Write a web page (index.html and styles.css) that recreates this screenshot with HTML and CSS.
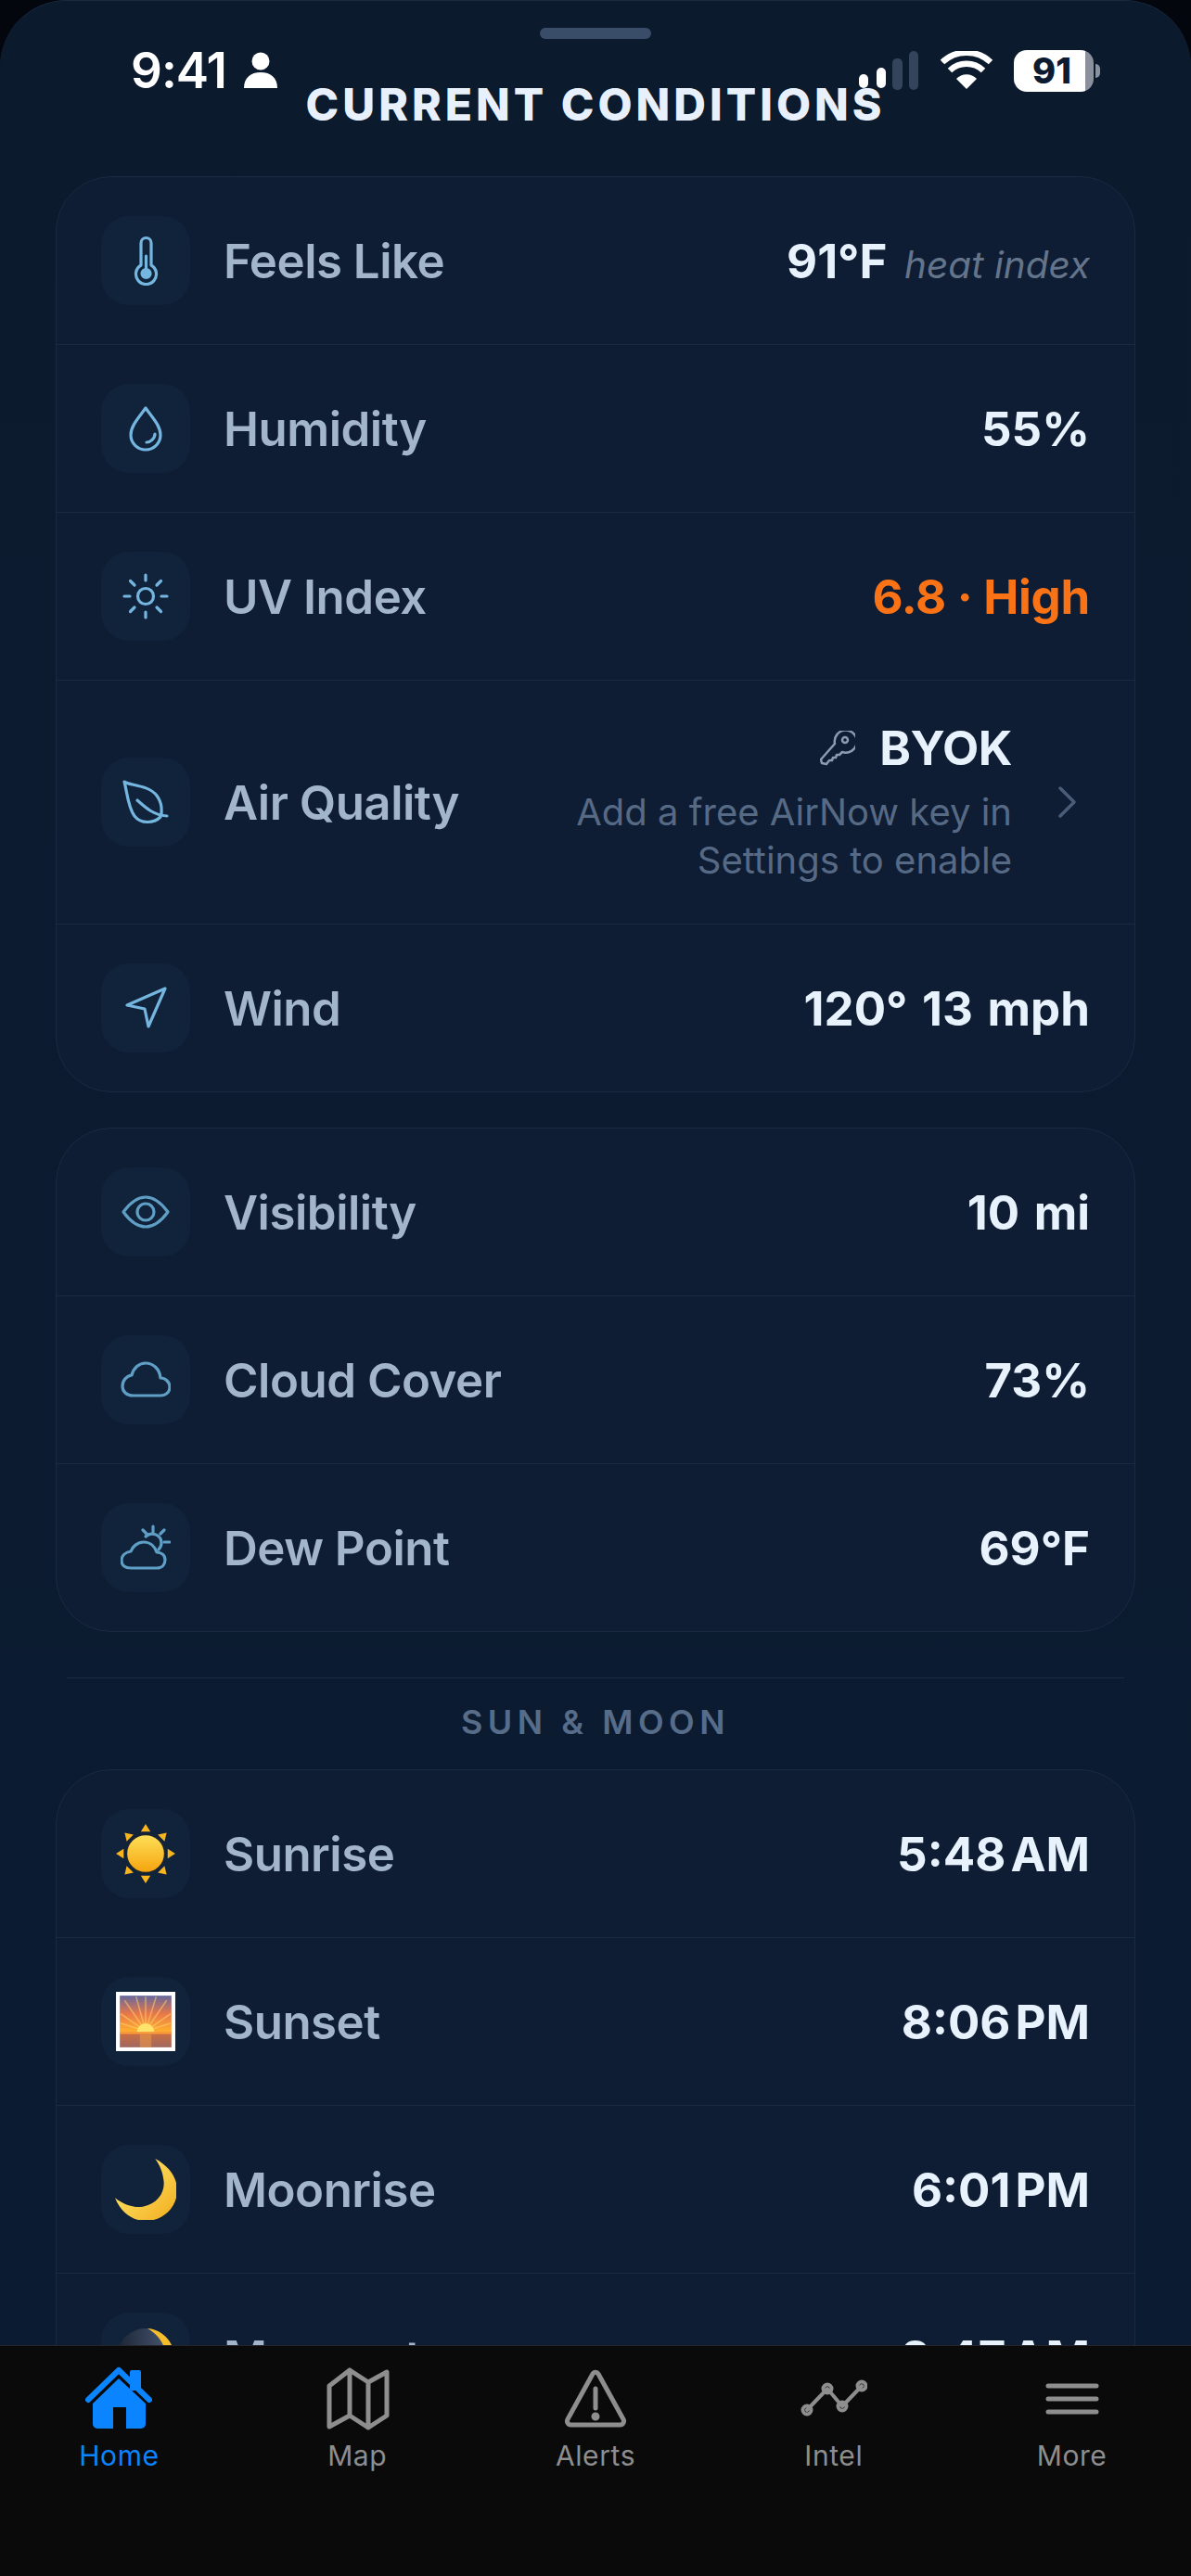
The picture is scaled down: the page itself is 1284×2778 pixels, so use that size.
FILE: index.html
```html
<!DOCTYPE html>
<html lang="en">
<head>
    <meta charset="UTF-8" />
    <meta name="viewport" content="width=device-width, initial-scale=1.0" />
    <title>Current Conditions</title>
    <link rel="stylesheet" href="styles.css">
</head>
<body>
    <div class="phone">
        <div class="status-bar">
            <div class="status-left">
                <span class="clock">9:41</span>
                <svg width="36" height="40" viewBox="0 0 36 40"><circle cx="18" cy="10" r="9.5" fill="#fff"/><path d="M0 39c0-11 7-17 18-17s18 6 18 17z" fill="#fff"/></svg>
            </div>
            <div class="status-right">
                <svg width="66" height="44" viewBox="0 0 66 44">
                    <rect x="1" y="26" width="10" height="15" rx="5" fill="#fff"/>
                    <rect x="20" y="19" width="10" height="22" rx="5" fill="#fff"/>
                    <rect x="37" y="9" width="11" height="34" rx="5" fill="#33445b"/>
                    <rect x="55" y="1" width="10" height="42" rx="5" fill="#33445b"/>
                </svg>
                <svg width="58" height="42" viewBox="0 0 58 42" fill="none" stroke="#fff" stroke-width="6.5">
                    <path d="M29 41 18 30a15 15 0 0 1 22 0z" fill="#fff" stroke="none"/>
                    <path d="M11 21a26 26 0 0 1 36 0"/>
                    <path d="M3 12a38 38 0 0 1 52 0"/>
                </svg>
                <div class="battery">91</div>
            </div>
        </div>

        <main class="sheet">
            <div class="handle"></div>
            <h1>CURRENT CONDITIONS</h1>

            <section class="card">
                <div class="row">
                    <div class="icon-box">
                        <svg class="line-icon bright" viewBox="0 0 54 54"><path d="M22 32V8a5.500 5.500 0 0 1 11 0v24a11 11 0 1 1-11 0z"/><path d="M27.500 22v18"/><circle cx="27.500" cy="41" r="4.500" fill="currentColor"/></svg>
                    </div>
                    <span class="label">Feels Like</span>
                    <span class="value">91°F <em>heat index</em></span>
                </div>
                <div class="row">
                    <div class="icon-box">
                        <svg class="line-icon bright" viewBox="0 0 54 54"><path d="M27 5C20 15 11 24 11 34a16 16 0 0 0 32 0C43 24 34 15 27 5z"/><path d="M37 33c0 5-5 9-9 9"/></svg>
                    </div>
                    <span class="label">Humidity</span>
                    <span class="value">55%</span>
                </div>
                <div class="row">
                    <div class="icon-box">
                        <svg class="line-icon bright" viewBox="0 0 54 54"><circle cx="27" cy="27" r="8.500"/><path d="M27 4v6M27 44v6M4 27h6M44 27h6M10.500 10.500l4.500 4.500M39 39l4.500 4.500M10.500 43.500 15 39M39 15l4.500-4.500"/></svg>
                    </div>
                    <span class="label">UV Index</span>
                    <span class="value uv">6.8 · High</span>
                </div>
                <div class="row row-tall">
                    <div class="icon-box">
                        <svg class="line-icon bright" viewBox="0 0 54 54"><path d="M4 5c4 4 26 3 35 15 6 8 6 18 4 23-7 7-21 8-28-1C8 33 7 16 4 5z"/><path d="M18 25c10 9 18 16 32 17"/></svg>
                    </div>
                    <span class="label">Air Quality</span>
                    <div class="value-stack">
                        <div class="byok">
                            <svg width="38" height="38" viewBox="0 0 38 38" fill="none" stroke="#8b9bb0" stroke-width="2.500" stroke-linejoin="round"><path d="M16 14a12 12 0 1 1 8 9l-3 3h-3l-1 3h-3l-1 3h-3l-3 4-5-1-1-4z"/><circle cx="27" cy="10" r="3"/></svg>
                            <span class="value byok-text">BYOK</span>
                        </div>
                        <p class="hint">Add a free AirNow key in Settings to enable</p>
                    </div>
                    <svg class="chevron" width="34" height="34" viewBox="0 0 34 34"><path d="M2 2l15 15L2 32"/></svg>
                </div>
                <div class="row">
                    <div class="icon-box">
                        <svg class="line-icon bright" viewBox="0 0 54 54"><path d="M48 6 7 24l19 4 4 19z"/></svg>
                    </div>
                    <span class="label">Wind</span>
                    <span class="value">120° 13 mph</span>
                </div>
            </section>

            <section class="card">
                <div class="row">
                    <div class="icon-box">
                        <svg class="line-icon" viewBox="0 0 54 54"><path d="M3 27c8-11 16-16 24-16s16 5 24 16c-8 11-16 16-24 16S11 38 3 27z"/><circle cx="27" cy="27" r="9"/></svg>
                    </div>
                    <span class="label">Visibility</span>
                    <span class="value">10 mi</span>
                </div>
                <div class="row">
                    <div class="icon-box">
                        <svg class="line-icon" viewBox="0 0 54 54"><path d="M13 44h30c6 0 10-4 10-9 0-6-5-10-10-10-1-10-8-16-16-16-7 0-13 5-15 13-6 1-10 6-10 12 0 6 5 10 11 10z"/></svg>
                    </div>
                    <span class="label">Cloud Cover</span>
                    <span class="value">73%</span>
                </div>
                <div class="row">
                    <div class="icon-box">
                        <svg class="line-icon" viewBox="0 0 54 54"><path d="M11 49h28c6 0 9-4 9-9 0-5-4-8-9-8-2-6-7-11-14-11s-12 5-14 10c-6 1-10 5-10 10 0 5 4 8 10 8z"/><path d="M27 15a10 10 0 0 1 17 7c0 3-1 5-3 7"/><path d="M35 4v6M24 8l4 4M47 8l-4 4M47 21h6"/></svg>
                    </div>
                    <span class="label">Dew Point</span>
                    <span class="value">69°F</span>
                </div>
            </section>

            <div class="divider"></div>
            <h2>SUN &amp; MOON</h2>

            <section class="card">
                <div class="row">
                    <div class="icon-box">
                        <svg class="emoji" viewBox="0 0 64 64">
                            <defs><linearGradient id="sunFill" x1="0" y1="0" x2="0" y2="1"><stop offset="0" stop-color="#ffe05a"/><stop offset="1" stop-color="#f4a30c"/></linearGradient></defs>
                            <g fill="#fab41e">
                                <path d="M32 1l5 8H27z"/>
                                <path d="M32 1l5 8H27z" transform="rotate(45 32 32)"/>
                                <path d="M32 1l5 8H27z" transform="rotate(90 32 32)"/>
                                <path d="M32 1l5 8H27z" transform="rotate(135 32 32)"/>
                                <path d="M32 1l5 8H27z" transform="rotate(180 32 32)"/>
                                <path d="M32 1l5 8H27z" transform="rotate(225 32 32)"/>
                                <path d="M32 1l5 8H27z" transform="rotate(270 32 32)"/>
                                <path d="M32 1l5 8H27z" transform="rotate(315 32 32)"/>
                            </g>
                            <circle cx="32" cy="32" r="20" fill="url(#sunFill)" stroke="#1c2430" stroke-width="1.500"/>
                        </svg>
                    </div>
                    <span class="label">Sunrise</span>
                    <span class="value">5:48<i class="gap"></i>AM</span>
                </div>
                <div class="row">
                    <div class="icon-box">
                        <svg class="emoji" viewBox="0 0 64 64">
                            <defs><linearGradient id="sky" x1="0" y1="0" x2="0" y2="1"><stop offset="0" stop-color="#65689c"/><stop offset=".35" stop-color="#e8774a"/><stop offset=".7" stop-color="#ffb02e"/><stop offset=".71" stop-color="#cf6e3f"/><stop offset="1" stop-color="#a0695f"/></linearGradient></defs>
                            <rect x="1" y="1" width="62" height="62" fill="#fff"/>
                            <rect x="5" y="5" width="54" height="54" fill="url(#sky)"/>
                            <g stroke="#ffd36b" stroke-width="1.500" opacity=".55">
                                <path d="M32 42 10 10M32 42 22 6M32 42V6M32 42 43 6M32 42 54 10M32 42 6 24M32 42l26-18M32 42 6 34M32 42l26-8"/>
                            </g>
                            <path d="M23 43a9 9 0 0 1 18 0z" fill="#ffe36a"/>
                            <rect x="5" y="43" width="54" height="2" fill="#ff9e3c"/>
                            <rect x="26" y="45" width="12" height="14" fill="#e8964a" opacity=".6"/>
                        </svg>
                    </div>
                    <span class="label">Sunset</span>
                    <span class="value">8:06<i class="gap"></i>PM</span>
                </div>
                <div class="row">
                    <div class="icon-box">
                        <svg class="emoji" viewBox="0 0 64 64">
                            <defs><linearGradient id="moonFill" x1="0" y1="0" x2="1" y2="1"><stop offset="0" stop-color="#fff07a"/><stop offset="1" stop-color="#f2ac1c"/></linearGradient></defs>
                            <path d="M42 0c15 8 23 20 23 33 0 18-15 32-33 32-14 0-26-9-32-24 9 7 20 11 30 9 14-3 22-14 21-26-1-10-4-17-9-24z" fill="url(#moonFill)"/>
                        </svg>
                    </div>
                    <span class="label">Moonrise</span>
                    <span class="value">6:01<i class="gap"></i>PM</span>
                </div>
                <div class="row">
                    <div class="icon-box">
                        <svg class="emoji" viewBox="0 0 64 64">
                            <defs><linearGradient id="moonDark" x1="0" y1="0" x2="1" y2="0"><stop offset="0" stop-color="#1c2536"/><stop offset="1" stop-color="#4a5a76"/></linearGradient></defs>
                            <circle cx="32" cy="32" r="30" fill="url(#moonDark)"/>
                            <path d="M34 2c15 1 28 14 28 30h-9c0-12-7-23-19-30z" fill="#f5bd2c"/>
                        </svg>
                    </div>
                    <span class="label">Moonset</span>
                    <span class="value">2:47<i class="gap"></i>AM</span>
                </div>
            </section>
        </main>

        <nav class="tab-bar">
            <div class="tab active">
                <svg viewBox="0 0 72 72">
                    <path d="M36 14l29 27v22a5 5 0 0 1-5 5H44V45H30v23H13a5 5 0 0 1-5-5V41z" fill="currentColor"/>
                    <rect x="48" y="5" width="12" height="22" rx="2" fill="currentColor"/>
                    <path d="M3 37 36 5l33 32" fill="none" stroke="currentColor" stroke-width="6" stroke-linecap="round" stroke-linejoin="round"/>
                </svg>
                <span>Home</span>
            </div>
            <div class="tab">
                <svg class="tab-line" viewBox="0 0 72 72"><path d="M6 22 28 5l20 13 20-11v47L48 67 28 54 6 66zM28 5v49M48 18v49"/></svg>
                <span>Map</span>
            </div>
            <div class="tab">
                <svg class="tab-line" viewBox="0 0 72 72"><path d="M33 9a3.500 3.500 0 0 1 6 0l27 49a4 4 0 0 1-3.500 6h-53a4 4 0 0 1-3.500-6z"/><path d="M36 25v21"/><circle cx="36" cy="55" r="2" fill="currentColor"/></svg>
                <span>Alerts</span>
            </div>
            <div class="tab">
                <svg class="tab-line thin" viewBox="0 0 72 72"><path d="M7 48 29 25l16 19 21-22"/><circle cx="7" cy="48" r="4.500"/><circle cx="29" cy="25" r="4.500"/><circle cx="45" cy="44" r="4.500"/><circle cx="66" cy="22" r="4.500"/></svg>
                <span>Intel</span>
            </div>
            <div class="tab">
                <svg class="tab-line" viewBox="0 0 72 72"><path d="M10 22h52M10 36h52M10 50h52"/></svg>
                <span>More</span>
            </div>
        </nav>
    </div>
</body>
</html>
```

FILE: styles.css
```css
html, body {
    margin: 0;
    padding: 0;
    background: #000;
}

body {
    font-family: "Inter", "Liberation Sans", sans-serif;
}

.phone {
    position: relative;
    width: 1284px;
    height: 2778px;
    display: flex;
    flex-direction: column;
    overflow: hidden;
    background: #03070d;
}

/* status bar sits on top of the sheet */
.status-bar {
    position: absolute;
    top: 53px;
    left: 0;
    right: 0;
    height: 46px;
    padding: 0 105px 0 141px;
    display: flex;
    justify-content: space-between;
    align-items: center;
    color: #fff;
    z-index: 5;
}

.status-left {
    display: flex;
    align-items: center;
    gap: 19px;
}

.clock {
    font-size: 53px;
    font-weight: 600;
    line-height: 46px;
    letter-spacing: -1px;
}

.status-right {
    display: flex;
    align-items: center;
    gap: 22px;
}

.battery {
    position: relative;
    width: 86px;
    height: 45px;
    border-radius: 14px;
    background: linear-gradient(90deg, #fff 90%, #8a919c 90%);
    color: #0d1b30;
    font-size: 38px;
    font-weight: 800;
    line-height: 45px;
    text-align: center;
    padding-right: 4px;
    box-sizing: border-box;
}

.battery::after {
    content: '';
    position: absolute;
    top: 15px;
    right: -7px;
    width: 5px;
    height: 15px;
    border-radius: 0 8px 8px 0;
    background: #8a919c;
}

.sheet {
    flex: 1;
    min-height: 0;
    overflow: hidden;
    padding: 30px 60px 0;
    border-radius: 72px 72px 0 0;
    border-top: 1px solid #1a2a40;
    background: linear-gradient(180deg, #0c1a2d 0%, #0b1b31 100%);
    box-sizing: border-box;
}

.handle {
    width: 120px;
    height: 12px;
    margin: -1px auto 0;
    border-radius: 6px;
    background: #3a4d68;
}

h1 {
    margin: 41px 0 47px;
    font-size: 48px;
    font-weight: 800;
    line-height: 60px;
    letter-spacing: 4px;
    text-align: center;
    color: #e8f1fb;
}

h2 {
    margin: 0 0 29px;
    font-size: 36px;
    font-weight: 600;
    line-height: 44px;
    letter-spacing: 5.500px;
    text-align: center;
    color: #566c89;
}

.divider {
    height: 1px;
    margin: 49px 12px 25px;
    background: #1b2b42;
}

.card {
    margin-bottom: 38px;
    border: 1px solid #1a2a40;
    border-radius: 60px;
    background: #0e1d33;
}

.row {
    display: flex;
    align-items: center;
    height: 180px;
    padding: 0 48px;
    box-sizing: content-box;
}

.row + .row {
    border-top: 1px solid #1a2a40;
}

.row-tall {
    height: 262px;
}

.icon-box {
    flex: none;
    width: 96px;
    height: 96px;
    margin-right: 36px;
    border-radius: 30px;
    background: #11233a;
    display: flex;
    align-items: center;
    justify-content: center;
}

.line-icon {
    width: 54px;
    height: 54px;
    fill: none;
    stroke: #5f9fc6;
    color: #5f9fc6;
    stroke-width: 3.200;
    stroke-linecap: round;
    stroke-linejoin: round;
}

.line-icon.bright {
    stroke: #74b6e0;
    color: #74b6e0;
}

.emoji {
    width: 66px;
    height: 66px;
    flex: none;
}

.label {
    flex: 1;
    font-size: 51px;
    font-weight: 600;
    letter-spacing: -0.5px;
    color: #a2b5cb;
}

.value {
    font-size: 51px;
    font-weight: 700;
    word-spacing: 3.500px;
    color: #e8f2fc;
    white-space: nowrap;
}

.value em {
    margin-left: 3px;
    font-size: 40.500px;
    font-weight: 400;
    word-spacing: 0;
    color: #64748b;
}

.value .gap {
    display: inline-block;
    width: 5px;
}

.value.uv {
    word-spacing: 0;
    letter-spacing: -0.3px;
    color: #f97316;
}

.value-stack {
    width: 532px;
    text-align: right;
}

.byok {
    display: flex;
    justify-content: flex-end;
    align-items: center;
    gap: 26px;
    height: 60px;
}

.byok-text {
    letter-spacing: -0.5px;
}

.hint {
    margin: 13px 0 0;
    font-size: 40px;
    line-height: 52px;
    color: #566a85;
}

.chevron {
    flex: none;
    margin-left: 50px;
    fill: none;
    stroke: #4a5d78;
    stroke-width: 3.500;
    stroke-linecap: round;
    stroke-linejoin: round;
}

.tab-bar {
    flex: none;
    height: 249px;
    display: flex;
    background: #0a0a0a;
    border-top: 1px solid #26262a;
    box-sizing: border-box;
    position: relative;
}

.tab {
    flex: 1;
    display: flex;
    flex-direction: column;
    align-items: center;
    gap: 8px;
    padding-top: 21px;
    font-size: 30px;
    line-height: 34px;
    font-weight: 400;
    letter-spacing: 0.6px;
    color: #8e8e8e;
}

.tab svg {
    width: 72px;
    height: 72px;
}

.tab.active {
    color: #0a84ff;
}

.tab-line {
    fill: none;
    stroke: #8e8e8e;
    stroke-width: 5;
    stroke-linecap: round;
    stroke-linejoin: round;
}

.tab-line.thin {
    stroke-width: 4;
}
```
